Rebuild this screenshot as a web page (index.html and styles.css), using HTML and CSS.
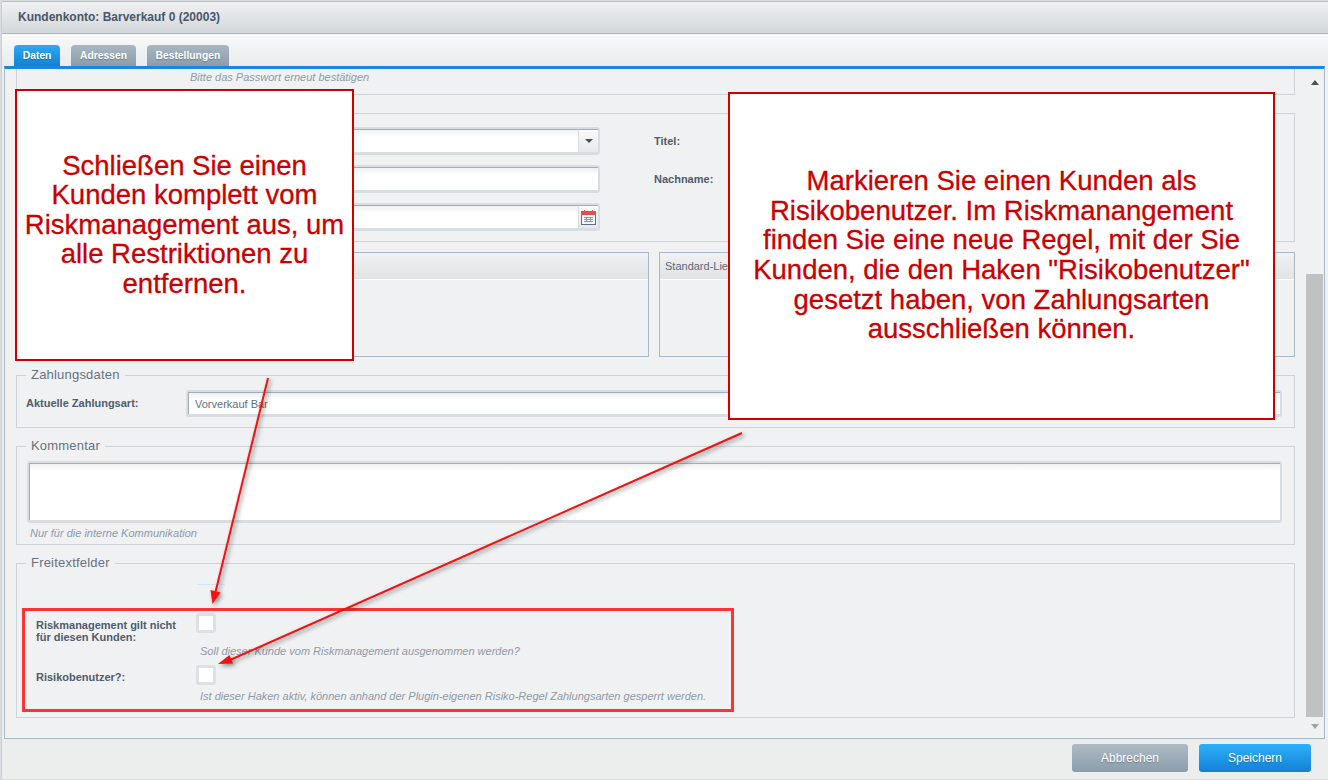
FILE: index.html
```html
<!DOCTYPE html>
<html lang="de">
<head>
  <meta charset="UTF-8">
  <title>Kundenkonto</title>
  <link rel="stylesheet" href="styles.css">
</head>
<body>

  <div class="window">
    <!-- Title -->
    <header class="title-bar">Kundenkonto: Barverkauf 0 (20003)</header>

    <!-- Tabs -->
    <nav class="tabs">
      <a class="tab active">Daten</a>
      <a class="tab">Adressen</a>
      <a class="tab">Bestellungen</a>
    </nav>

    <div class="pane">
      <div class="form">
        <section class="box box-password">
          <p class="hint">Bitte das Passwort erneut bestätigen</p>
        </section>

        <section class="box box-person">
          <div class="person-col">
            <div class="field">
              <span class="fill"></span>
              <span class="trigger"><span class="caret"></span></span>
            </div>
            <div class="field"><span class="fill"></span></div>
            <div class="field">
              <span class="fill"></span>
              <span class="trigger">
                <svg class="cal" viewBox="0 0 15 15" width="15" height="15">
                  <rect x="0.5" y="1.5" width="14" height="13" fill="#f4f6f8" stroke="#5c7184"/>
                  <rect x="0" y="1" width="15" height="4" fill="#e2504c"/>
                  <rect x="3" y="0" width="1" height="2" fill="#e2504c"/>
                  <rect x="11" y="0" width="1" height="2" fill="#e2504c"/>
                  <path d="M3 7h9v1H3zM3 9h9v1H3zM3 11h9v1H3zM5 7h1v5H5zM9 7h1v5H9z" fill="#8b9aa8"/>
                </svg>
              </span>
            </div>
          </div>
          <div class="label-col">
            <label>Titel:</label>
            <label>Nachname:</label>
          </div>
        </section>

        <div class="panels">
          <div class="panel panel-left"><div class="panel-head"></div></div>
          <div class="panel"><div class="panel-head">Standard-Lie</div></div>
        </div>

        <fieldset class="group">
          <legend>Zahlungsdaten</legend>
          <div class="pay-row">
            <label>Aktuelle Zahlungsart:</label>
            <div class="field"><span class="fill">Vorverkauf Bar</span></div>
          </div>
        </fieldset>

        <fieldset class="group">
          <legend>Kommentar</legend>
          <div class="field area"><span class="fill"></span></div>
          <p class="hint note">Nur für die interne Kommunikation</p>
        </fieldset>

        <fieldset class="group free">
          <legend>Freitextfelder</legend>
          <div class="tick"></div>
          <div class="check-row">
            <label>Riskmanagement gilt nicht<br>für diesen Kunden:</label>
            <span class="checkbox"></span>
          </div>
          <p class="hint">Soll dieser Kunde vom Riskmanagement ausgenommen werden?</p>
          <div class="check-row second">
            <label>Risikobenutzer?:</label>
            <span class="checkbox"></span>
          </div>
          <p class="hint last">Ist dieser Haken aktiv, können anhand der Plugin-eigenen Risiko-Regel Zahlungsarten gesperrt werden.</p>
        </fieldset>
      </div>

      <!-- Scrollbar -->
      <div class="scrollbar">
        <span class="arrow up"></span>
        <span class="thumb"></span>
        <span class="arrow down"></span>
      </div>
    </div>

    <footer class="actions">
      <button class="btn btn-grey">Abbrechen</button>
      <button class="btn btn-blue">Speichern</button>
    </footer>
  </div>

  <!-- Annotations on top of the screenshot -->
  <div class="note-box note-left">Schließen Sie einen<br>Kunden komplett vom<br>Riskmanagement aus, um<br>alle Restriktionen zu<br>entfernen.</div>
  <div class="note-box note-right">Markieren Sie einen Kunden als<br>Risikobenutzer. Im Riskmanangement<br>finden Sie eine neue Regel, mit der Sie<br>Kunden, die den Haken "Risikobenutzer"<br>gesetzt haben, von Zahlungsarten<br>ausschließen können.</div>
  <div class="highlight"></div>

  <svg class="arrows" width="1328" height="780" viewBox="0 0 1328 780">
    <g class="arrow-shape">
      <path d="M268 378L215.5 592" stroke="#f5100f" stroke-width="2" fill="none"/>
      <path d="M212.5 604L210.5 590L220.5 592.5Z" fill="#f5100f"/>
      <path d="M742 433L230 660" stroke="#f5100f" stroke-width="2" fill="none"/>
      <path d="M218 664L229.5 655L233 663.5Z" fill="#f5100f"/>
    </g>
  </svg>

</body>
</html>
```

FILE: styles.css
```css
* {
  box-sizing: border-box;
}

html, body {
  margin: 0;
  height: 780px;
  overflow: hidden;
}

body {
  font-family: "Liberation Sans", Arial, sans-serif;
  font-size: 11px;
  color: #4e5c6c;
  background: #d9dde2;
  padding: 1px 0 0 1px;
}

.window {
  height: 778px;
  width: 1327px;
  display: flex;
  flex-direction: column;
  background: #f0f1f3;
  border-top: 1px solid #b4bfc9;
  border-left: 1px solid #c6ced6;
  border-radius: 3px 0 0 0;
}

.title-bar {
  height: 32px;
  flex: none;
  padding: 8px 0 0 16px;
  font-size: 12px;
  font-weight: bold;
  line-height: 14px;
  color: #495766;
  background: linear-gradient(to bottom, #eff0f2, #d3d8dc);
  border-bottom: 1px solid #a9b5c0;
}

.tabs {
  height: 32px;
  flex: none;
  display: flex;
  align-items: flex-end;
  gap: 11px;
  padding: 0 0 0 12px;
  background: linear-gradient(to bottom, #f9f9fa, #e9ebed);
}

.tab {
  height: 21px;
  padding: 5px 8.8px 0;
  font-size: 10.3px;
  font-weight: bold;
  line-height: 12px;
  color: #fff;
  text-shadow: 0 1px 1px rgba(0, 0, 0, 0.25);
  border-radius: 4px 4px 0 0;
  background: linear-gradient(to bottom, #aab7c2, #8a9cab);
}

.tab.active {
  background: linear-gradient(to bottom, #2fa9f3, #1481d6);
}

.pane {
  flex: 1;
  min-height: 0;
  display: flex;
  margin: 0 3px 0 2px;
  overflow: hidden;
  border-top: 3px solid #1a87d8;
  border-left: 1px solid #a7b9c8;
  border-bottom: 1px solid #a7b9c8;
  border-right: 1px solid #a7b9c8;
}

.form {
  width: 1290px;
  flex: none;
  padding: 0 0 0 11px;
}

.scrollbar {
  flex: 1;
  display: flex;
  flex-direction: column;
  align-items: center;
  padding: 11px 1px 0 11px;
}

.thumb {
  width: 17px;
  height: 443px;
  flex: none;
  margin-top: 189px;
  background: #c1c1c1;
}

.arrow {
  width: 0;
  height: 0;
  flex: none;
  border-left: 4.5px solid transparent;
  border-right: 4.5px solid transparent;
}

.arrow.up {
  border-bottom: 5px solid #505050;
}

.arrow.down {
  margin-top: 7px;
  border-top: 5px solid #a3a3a3;
}

.box {
  border: 1px solid #cfd3d7;
}

.box-password {
  height: 26px;
  border-top: none;
  padding: 2px 0 0 173px;
}

.hint {
  margin: 0;
  font-size: 11px;
  font-style: italic;
  line-height: 12px;
  color: #8e9aa6;
}

.box-person {
  height: 129px;
  margin-top: 18px;
  padding: 13px 0 0 169px;
  display: flex;
}

.person-col {
  width: 414px;
  display: flex;
  flex-direction: column;
  gap: 10px;
}

.field {
  height: 28px;
  display: flex;
  padding: 2px 2px 3px;
  background: #d8dde2;
  border-radius: 3px;
}

.fill {
  flex: 1;
  padding: 0 6px;
  font-size: 11px;
  line-height: 22px;
  color: #5f6e7c;
  background: linear-gradient(to bottom, #eef0f1, #fff 7px);
  border-top: 1px solid #a2adb7;
  border-left: 1px solid #a2adb7;
}

.trigger {
  width: 20px;
  flex: none;
  display: flex;
  align-items: center;
  justify-content: center;
  background: linear-gradient(to bottom, #fafafb, #e6e8ea);
  border-left: 1px solid #d8dde2;
  border-top: 1px solid #a2adb7;
}

.caret {
  width: 0;
  height: 0;
  border-left: 4px solid transparent;
  border-right: 4px solid transparent;
  border-top: 4px solid #4a5058;
}

.label-col {
  margin-left: 54px;
  display: flex;
  flex-direction: column;
  gap: 25px;
  padding-top: 8px;
}

label {
  font-size: 11px;
  font-weight: bold;
  line-height: 13px;
  color: #4e5c6c;
}

.panels {
  display: flex;
  gap: 10px;
  margin: 10px 0;
}

.panel {
  height: 105px;
  flex: 1;
  border: 1px solid #a7b9c8;
}

.panel-left {
  flex: none;
  width: 633px;
}

.panel-head {
  height: 27px;
  padding: 7px 5px 0;
  font-size: 11px;
  line-height: 13px;
  color: #5b6977;
  background: linear-gradient(to bottom, #f0f1f2, #e1e3e5);
  border-bottom: 1px solid #fff;
}

.group {
  margin: 0 0 10px;
  padding: 0 12px 0 9px;
  min-width: 0;
  border: 1px solid #cfd3d7;
}

.group legend {
  margin-left: 0;
  padding: 0 5px;
  font-size: 13px;
  line-height: 16px;
  letter-spacing: 0.2px;
  color: #66727f;
}

.pay-row {
  display: flex;
  align-items: center;
  padding: 7px 0 10px;
}

.pay-row label {
  width: 160px;
  flex: none;
}

.pay-row .field {
  flex: 1;
  height: 27px;
}

.area {
  height: 62px;
  margin: 7px 0 0 1px;
}

.note {
  margin: 4px 0 5px 4px;
}

.free {
  height: 163px;
}

.tick {
  width: 28px;
  height: 1px;
  margin: 13px 0 0 171px;
  background: #d5e5f3;
}

.check-row {
  height: 20px;
  margin-top: 28px;
  display: flex;
  padding-left: 10px;
}

.check-row label {
  width: 160px;
  flex: none;
  padding-top: 6px;
  line-height: 12px;
}

.check-row.second {
  margin-top: 8px;
}

.checkbox {
  width: 20px;
  height: 20px;
  border: 3px solid #dde0e4;
  border-radius: 3px;
  background: #fff;
}

.free .hint {
  margin-top: 12px;
  padding-left: 174px;
}

.free .hint.last {
  margin-top: 5px;
}

.btn {
  height: 28px;
  border: none;
  border-radius: 3px;
  color: #fff;
  font-family: inherit;
  font-size: 12px;
  padding: 0;
  text-shadow: 0 1px 1px rgba(0, 0, 0, 0.25);
}

.actions {
  height: 40px;
  flex: none;
  display: flex;
  justify-content: flex-end;
  gap: 11px;
  padding: 5px 17px 0 0;
  background: #eceded;
}

.btn-grey {
  width: 116px;
  background: linear-gradient(to bottom, #aebbc5, #8a9dab);
}

.btn-blue {
  width: 112px;
  background: linear-gradient(to bottom, #2eb0fb, #1380d6);
}

/* Annotations */
.note-box {
  position: absolute;
  display: flex;
  align-items: center;
  justify-content: center;
  text-align: center;
  font-size: 27.5px;
  line-height: 29.6px;
  color: #cc0000;
  background: #fff;
  border: 2px solid #cc0000;
  -webkit-text-stroke: 0.3px #cc0000;
}

.note-left {
  left: 15px;
  top: 89px;
  width: 339px;
  height: 272px;
  padding-bottom: 1px;
}

.note-right {
  left: 728px;
  top: 92px;
  width: 547px;
  height: 328px;
  padding-bottom: 2px;
}

.highlight {
  position: absolute;
  left: 22px;
  top: 608px;
  width: 712px;
  height: 104px;
  border: 3px solid #ff3333;
}

.arrows {
  position: absolute;
  left: 0;
  top: 0;
}

.arrow-shape {
  filter: drop-shadow(2px 2px 2px rgba(0, 0, 0, 0.45));
}
```
